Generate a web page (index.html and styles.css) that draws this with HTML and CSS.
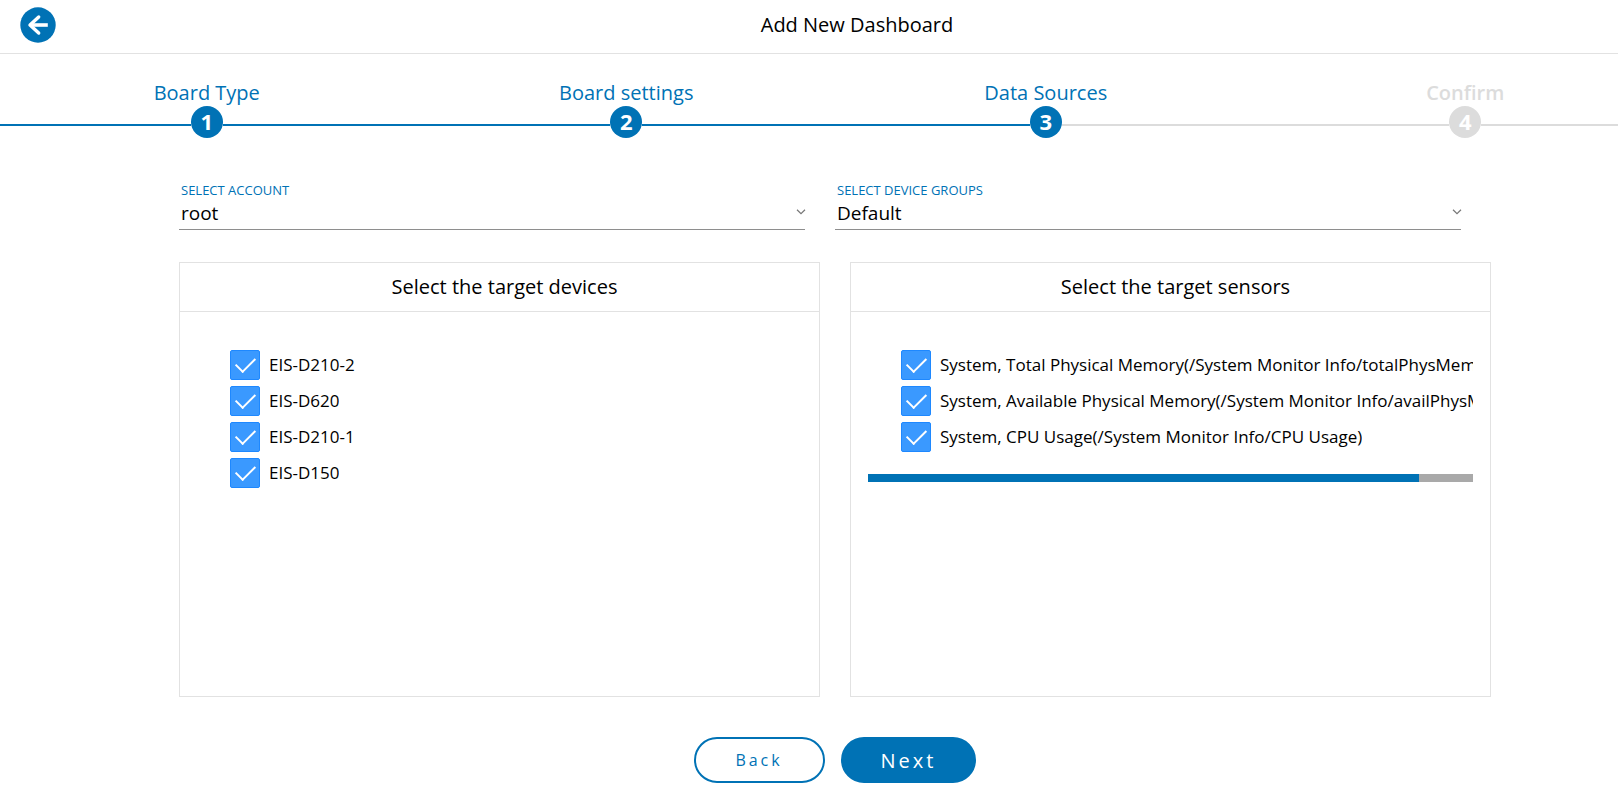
FILE: index.html
```html
<!DOCTYPE html>
<html lang="en">
<head>
<meta charset="utf-8">
<meta name="viewport" content="width=device-width, initial-scale=1">
<title>Add New Dashboard</title>
<link rel="stylesheet" href="styles.css">
</head>
<body>
<header class="topbar">
  <button class="topbar-back" type="button" aria-label="Go back">
    <svg viewBox="0 0 36 36" width="36" height="36" aria-hidden="true"><circle cx="18" cy="18" r="17.7" fill="#0072b5"/><path d="M10.5 18h17.3" fill="none" stroke="#fff" stroke-width="3.6"/><path d="M18.7 10 10 18l8.7 8" fill="none" stroke="#fff" stroke-width="3.4" stroke-linecap="round" stroke-linejoin="round"/></svg>
  </button>
  <h1 class="topbar-title">Add New Dashboard</h1>
</header>

<nav class="steps-wrap" aria-label="Progress">
  <ol class="steps">
    <li class="step"><span class="step-name">Board Type</span><span class="step-track"><span class="step-number">1</span></span></li>
    <li class="step"><span class="step-name">Board settings</span><span class="step-track"><span class="step-number">2</span></span></li>
    <li class="step step-current"><span class="step-name">Data Sources</span><span class="step-track"><span class="step-number">3</span></span></li>
    <li class="step step-pending"><span class="step-name">Confirm</span><span class="step-track"><span class="step-number">4</span></span></li>
  </ol>
</nav>

<main class="content">
  <div class="fields">
    <div class="field">
      <label class="field-label" for="account">SELECT ACCOUNT</label>
      <div class="field-control">
        <select id="account" class="field-select"><option>root</option></select>
        <svg class="field-arrow" viewBox="0 0 10 6" width="10" height="6" aria-hidden="true"><path d="M1 .8 5 4.6 9 .8" fill="none" stroke="#777" stroke-width="1.2"/></svg>
      </div>
    </div>
    <div class="field">
      <label class="field-label" for="groups">SELECT DEVICE GROUPS</label>
      <div class="field-control">
        <select id="groups" class="field-select"><option>Default</option></select>
        <svg class="field-arrow" viewBox="0 0 10 6" width="10" height="6" aria-hidden="true"><path d="M1 .8 5 4.6 9 .8" fill="none" stroke="#777" stroke-width="1.2"/></svg>
      </div>
    </div>
  </div>

  <div class="panels">
    <section class="panel">
      <h2 class="panel-title">Select the target devices</h2>
      <div class="panel-body">
        <div class="options">
          <label class="option"><input class="option-box" type="checkbox" checked><span class="option-text">EIS-D210-2</span></label>
          <label class="option"><input class="option-box" type="checkbox" checked><span class="option-text">EIS-D620</span></label>
          <label class="option"><input class="option-box" type="checkbox" checked><span class="option-text">EIS-D210-1</span></label>
          <label class="option"><input class="option-box" type="checkbox" checked><span class="option-text">EIS-D150</span></label>
        </div>
      </div>
    </section>
    <section class="panel">
      <h2 class="panel-title">Select the target sensors</h2>
      <div class="panel-body">
        <div class="options">
          <label class="option"><input class="option-box" type="checkbox" checked><span class="option-text">System, Total Physical Memory(/System Monitor Info/totalPhysMemKB)</span></label>
          <label class="option"><input class="option-box" type="checkbox" checked><span class="option-text">System, Available Physical Memory(/System Monitor Info/availPhysMemKB)</span></label>
          <label class="option"><input class="option-box" type="checkbox" checked><span class="option-text">System, CPU Usage(/System Monitor Info/CPU Usage)</span></label>
        </div>
        <div class="scroll-track"><div class="scroll-thumb"></div></div>
      </div>
    </section>
  </div>

  <div class="actions">
    <button class="button button-outline" type="button">Back</button>
    <button class="button button-solid" type="button">Next</button>
  </div>
</main>
</body>
</html>
```
FILE: styles.css
```css
:root {
  --blue: #0072b5;
  --line: #e2e2e2;
  --muted: #dcdcdc;
}

* {
  box-sizing: border-box;
}

body {
  margin: 0;
  background: #fff;
  color: #000;
  font-family: "Open Sans", "Noto Sans", sans-serif;
  font-size: 16px;
  overflow-x: hidden;
}

.topbar {
  display: flex;
  align-items: center;
  padding: 7px 20px 10px;
  border-bottom: 1px solid var(--line);
}

.topbar-back {
  display: block;
  width: 36px;
  height: 36px;
  padding: 0;
  border: 0;
  background: none;
  cursor: pointer;
}

.topbar-back svg {
  display: block;
}

.topbar-title {
  flex: 1;
  margin: 0 0 0 60px;
  font-size: 20px;
  line-height: 36px;
  font-weight: 400;
  text-align: center;
}

.steps-wrap {
  overflow: hidden;
  padding-top: 26px;
}

.steps {
  display: grid;
  grid-template-columns: repeat(4, 1fr);
  margin: 0 -57px 0 -3px;
  padding: 0;
  list-style: none;
}

.step {
  color: var(--blue);
  text-align: center;
}

.step-name {
  display: block;
  font-size: 20px;
  line-height: 26px;
  font-weight: 500;
}

.step-track {
  display: flex;
  align-items: center;
}

.step-track::before,
.step-track::after {
  content: "";
  flex: 1;
  height: 2px;
  margin-top: 6px;
  background: var(--blue);
}

.step-number {
  width: 32px;
  height: 32px;
  border-radius: 50%;
  background: var(--blue);
  color: #fff;
  font-size: 22px;
  line-height: 31px;
  font-weight: 700;
}

.step-current .step-track::after,
.step-pending .step-track::before,
.step-pending .step-track::after,
.step-pending .step-number {
  background: var(--muted);
}

.step-pending {
  color: var(--muted);
}

.step-pending .step-name {
  font-weight: 600;
}

.content {
  padding: 43px 127px 27px 179px;
}

.fields {
  display: grid;
  grid-template-columns: 1fr 1fr;
  gap: 30px;
  padding-right: 30px;
}

.field-label {
  display: block;
  padding-left: 2px;
  color: var(--blue);
  font-size: 13px;
  line-height: 19px;
}

.field-control {
  position: relative;
}

.field-select {
  display: block;
  width: 100%;
  height: 30px;
  padding: 0 24px 4px 2px;
  border: 0;
  border-bottom: 1px solid #8e8e8e;
  border-radius: 0;
  appearance: none;
  background: none;
  color: #000;
  font-family: inherit;
  font-size: 19px;
}

.field-arrow {
  position: absolute;
  top: 9px;
  right: -1px;
  pointer-events: none;
}

.panels {
  display: grid;
  grid-template-columns: minmax(0, 1fr) minmax(0, 1fr);
  gap: 30px;
  margin-top: 32px;
}

.panel {
  border: 1px solid var(--line);
}

.panel-title {
  margin: 0;
  padding-left: 10px;
  border-bottom: 1px solid var(--line);
  font-size: 20px;
  line-height: 48px;
  font-weight: 400;
  text-align: center;
}

.panel-body {
  min-height: 384px;
  padding: 38px 17px 0;
}

.options {
  display: grid;
  grid-template-columns: minmax(0, 1fr);
  gap: 6px;
  padding-left: 33px;
}

.option {
  display: flex;
  align-items: center;
  gap: 9px;
}

.option-box {
  flex: none;
  width: 30px;
  height: 30px;
  margin: 0;
  border: 1px solid #1e88ff;
  border-radius: 2px;
  appearance: none;
  background: #3a99ff;
}

.option-box:checked::before {
  content: "";
  display: block;
  width: 17px;
  height: 9px;
  margin: 6px 0 0 5px;
  border: solid #fff;
  border-width: 0 0 2px 2px;
  transform: rotate(-45deg);
}

.option-text {
  overflow: hidden;
  font-size: 17px;
  line-height: 30px;
  white-space: nowrap;
}

.scroll-track {
  height: 8px;
  margin-top: 22px;
  background: #a9a9a9;
}

.scroll-thumb {
  width: 91%;
  height: 8px;
  background: var(--blue);
}

.actions {
  display: flex;
  justify-content: center;
  gap: 16px;
  margin-top: 40px;
}

.button {
  height: 46px;
  padding: 0 38px;
  border: 2px solid var(--blue);
  border-radius: 23px;
  font-family: inherit;
  letter-spacing: 3px;
  cursor: pointer;
}

.button-outline {
  min-width: 131px;
  background: #fff;
  color: var(--blue);
  font-size: 16px;
  font-weight: 400;
}

.button-solid {
  min-width: 135px;
  background: var(--blue);
  color: #fff;
  font-size: 20px;
  font-weight: 500;
}
```
